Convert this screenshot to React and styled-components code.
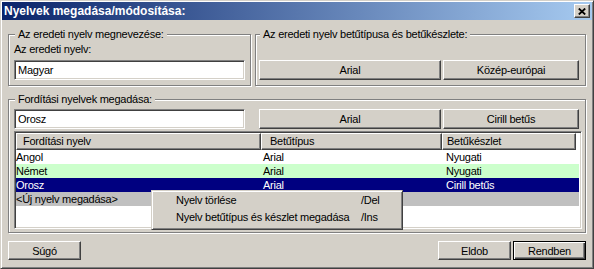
import React from 'react';
import styled, { createGlobalStyle } from 'styled-components';

const face = '#D4D0C8';

const GlobalStyle = createGlobalStyle`
    html, body {
        margin: 0;
        padding: 0;
        background: ${face};
    }
    body {
        font-family: "Liberation Sans", Arial, sans-serif;
        font-size: 11px;
        letter-spacing: -0.25px;
        color: #000;
    }
`;

const columns = [
    { label: 'Fordítási nyelv', head: 6, cell: 0 },
    { label: 'Betűtípus', head: 8, cell: 1 },
    { label: 'Betűkészlet', head: 4, cell: 3 }
];

const languages = [
    { name: 'Angol', font: 'Arial', charset: 'Nyugati', tone: 'plain' },
    { name: 'Német', font: 'Arial', charset: 'Nyugati', tone: 'green' },
    { name: 'Orosz', font: 'Arial', charset: 'Cirill betűs', tone: 'selected' },
    { name: '<Új nyelv megadása>', font: '', charset: '', tone: 'new' }
];

const menuItems = [
    { label: 'Nyelv törlése', key: '/Del' },
    { label: 'Nyelv betűtípus és készlet megadása', key: '/Ins' }
];

const App = () =>
{
    return (<>
        <GlobalStyle />
        <Window>
            <TitleBar>
                <Title>Nyelvek megadása/módosítása:</Title>
                <CloseButton aria-label="Bezárás">
                    <svg width="8" height="7" viewBox="0 0 8 7">
                        <path d="M0.8 0.5 L7.2 6.5 M7.2 0.5 L0.8 6.5" stroke="#000" strokeWidth="1.8" fill="none" />
                    </svg>
                </CloseButton>
            </TitleBar>
            <Body>
                <TopRow>
                    <Group $width="243px" $pad="2px 5px 5px 5px">
                        <Legend>Az eredeti nyelv megnevezése:</Legend>
                        <FieldLabel>Az eredeti nyelv:</FieldLabel>
                        <TextBox readOnly value="Magyar" />
                    </Group>
                    <Group $grow $pad="2px 4px 5px 3px">
                        <Legend>Az eredeti nyelv betűtípusa és betűkészlete:</Legend>
                        <ButtonRow>
                            <Button $width="182px">Arial</Button>
                            <Button $width="136px">Közép-európai</Button>
                        </ButtonRow>
                    </Group>
                </TopRow>
                <Group $mt="7px" $pad="3px 3px 3px 5px">
                    <Legend>Fordítási nyelvek megadása:</Legend>
                    <EditRow>
                        <TextBox $width="231px" readOnly value="Orosz" />
                        <Button $width="182px">Arial</Button>
                        <Button $width="136px">Cirill betűs</Button>
                    </EditRow>
                    <ListView>
                        <HeaderRow>
                            {columns.map(c => <HeaderCell key={c.label} $pad={c.head}>{c.label}</HeaderCell>)}
                        </HeaderRow>
                        {languages.map(l => (
                            <Row key={l.name} $tone={l.tone}>
                                <Cell $pad={columns[0].cell}>{l.name}</Cell>
                                <Cell $pad={columns[1].cell}>{l.font}</Cell>
                                <Cell $pad={columns[2].cell}>{l.charset}</Cell>
                            </Row>
                        ))}
                        <ContextMenu>
                            {menuItems.map(m => (
                                <MenuItem key={m.key}>
                                    <MenuLabel>{m.label}</MenuLabel>
                                    <MenuKey>{m.key}</MenuKey>
                                </MenuItem>
                            ))}
                        </ContextMenu>
                    </ListView>
                </Group>
                <Footer>
                    <Button $width="73px" $height="19px">Súgó</Button>
                    <Spacer />
                    <Button $width="73px" $height="19px">Eldob</Button>
                    <DefaultButton>Rendben</DefaultButton>
                </Footer>
            </Body>
        </Window>
    </>);
};

export default App;

const Window = styled.div`
    width: 594px;
    height: 269px;
    box-sizing: border-box;
    display: flex;
    flex-direction: column;
    background: ${face};
    border: 1px solid;
    border-color: ${face} #404040 #404040 ${face};
    box-shadow: inset 1px 1px 0 #fff, inset -1px -1px 0 #808080;
    padding: 1px;
`;

const TitleBar = styled.div`
    height: 18px;
    flex: none;
    display: flex;
    align-items: center;
    padding: 0 2px 0 2px;
    background: linear-gradient(to right, #0A246A, #A6CAF0);
`;

const Title = styled.div`
    flex: 1;
    color: #fff;
    font-weight: bold;
    font-size: 12px;
    letter-spacing: 0;
    line-height: 14px;
    white-space: nowrap;
`;

const CloseButton = styled.button`
    width: 16px;
    height: 14px;
    padding: 0;
    display: flex;
    align-items: center;
    justify-content: center;
    box-sizing: border-box;
    background: ${face};
    border: 1px solid;
    border-color: #fff #404040 #404040 #fff;
    box-shadow: inset -1px -1px 0 #808080;
    svg { display: block; }
`;

const Body = styled.div`
    flex: 1;
    display: flex;
    flex-direction: column;
    padding: 8px 6px 0 6px;
`;

const TopRow = styled.div`
    display: flex;
    gap: 4px;
`;

const Group = styled.fieldset`
    margin: 0;
    margin-top: ${p => p.$mt || '0'};
    min-width: 0;
    box-sizing: border-box;
    width: ${p => p.$width || 'auto'};
    flex: ${p => p.$grow ? '1' : 'none'};
    display: flex;
    flex-direction: column;
    padding: ${p => p.$pad};
    border: 1px solid #808080;
    box-shadow: inset 1px 1px 0 #fff, 1px 1px 0 #fff;
`;

const Legend = styled.legend`
    margin-left: 1px;
    padding: 0 3px;
    line-height: 13px;
    background: ${face};
    white-space: nowrap;
`;

const FieldLabel = styled.div`
    line-height: 13px;
    margin-bottom: 4px;
`;

const TextBox = styled.input`
    width: ${p => p.$width || '100%'};
    height: 20px;
    flex: none;
    box-sizing: border-box;
    margin: 0;
    padding: 0 3px;
    font: inherit;
    letter-spacing: inherit;
    color: #000;
    background: #fff;
    outline: none;
    border: 1px solid;
    border-color: #808080 #fff #fff #808080;
    box-shadow: inset 1px 1px 0 #404040, inset -1px -1px 0 ${face};
`;

const Button = styled.button`
    width: ${p => p.$width};
    height: ${p => p.$height || '20px'};
    flex: none;
    box-sizing: border-box;
    margin: 0;
    padding: 0;
    font: inherit;
    letter-spacing: inherit;
    color: #000;
    background: ${face};
    border: 1px solid;
    border-color: #fff #404040 #404040 #fff;
    box-shadow: inset -1px -1px 0 #808080;
`;

const DefaultButton = styled(Button)`
    width: 73px;
    height: 19px;
    margin-left: 2px;
    border-color: #000;
    box-shadow: inset 1px 1px 0 #fff, inset -1px -1px 0 #404040, inset -2px -2px 0 #808080;
`;

const ButtonRow = styled.div`
    margin-top: auto;
    display: flex;
    gap: 2px;
`;

const EditRow = styled.div`
    display: flex;
    gap: 2px;
    input { margin-right: 12px; }
`;

const ListView = styled.div`
    position: relative;
    margin-top: 2px;
    height: 98px;
    box-sizing: border-box;
    background: #fff;
    border: 1px solid;
    border-color: #808080 #fff #fff #808080;
    box-shadow: inset 1px 1px 0 #404040, inset -1px -1px 0 ${face};
    padding: 1px 2px 1px 1px;
`;

const HeaderRow = styled.div`
    display: grid;
    grid-template-columns: 245px 181px 134px;
    height: 17px;
`;

const HeaderCell = styled.div`
    box-sizing: border-box;
    background: ${face};
    padding: 1px 0 0 ${p => p.$pad}px;
    line-height: 13px;
    border: 1px solid;
    border-color: #fff #404040 #404040 #fff;
    box-shadow: inset -1px -1px 0 #808080;
    white-space: nowrap;
`;

const toneColors = {
    plain: ['#fff', '#000'],
    green: ['#CCFFCC', '#000'],
    selected: ['#000080', '#fff'],
    new: ['#C0C0C0', '#000']
};

const Row = styled.div`
    display: grid;
    grid-template-columns: 246px 181px 1fr;
    height: 14px;
    line-height: 14px;
    background: ${p => toneColors[p.$tone][0]};
    color: ${p => toneColors[p.$tone][1]};
`;

const Cell = styled.div`
    padding-left: ${p => p.$pad}px;
    white-space: nowrap;
`;

const ContextMenu = styled.div`
    position: absolute;
    left: 136px;
    top: 58px;
    width: 252px;
    height: 40px;
    box-sizing: border-box;
    padding: 1px;
    background: ${face};
    border: 1px solid;
    border-color: ${face} #404040 #404040 ${face};
    box-shadow: inset 1px 1px 0 #fff, inset -1px -1px 0 #808080;
`;

const MenuItem = styled.div`
    display: flex;
    height: 17px;
    line-height: 17px;
    padding-left: 23px;
`;

const MenuLabel = styled.span`
    flex: 1;
    white-space: nowrap;
`;

const MenuKey = styled.span`
    width: 40px;
`;

const Footer = styled.div`
    display: flex;
    margin-top: 8px;
`;

const Spacer = styled.div`
    flex: 1;
`;
